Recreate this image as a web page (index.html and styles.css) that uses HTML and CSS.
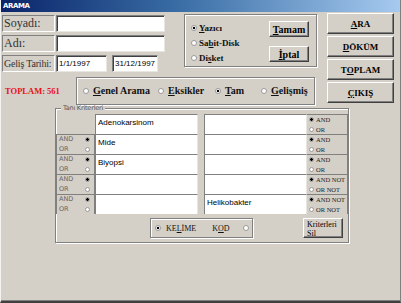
FILE: index.html
```html
<!DOCTYPE html>
<html lang="tr">
<head>
  <meta charset="UTF-8">
  <title>ARAMA</title>
  <link rel="stylesheet" href="styles.css">
</head>
<body>
  <div class="window">
    <div class="titlebar">ARAMA</div>

    <div class="content">
      <div class="upper">
        <div class="main">
          <div class="toprow">
            <div class="fields">
              <div class="field">
                <span class="label">Soyadı:</span>
                <span class="input long"></span>
              </div>
              <div class="field">
                <span class="label">Adı:</span>
                <span class="input long"></span>
              </div>
              <div class="field">
                <span class="label small">Geliş Tarihi:</span>
                <span class="input date">1/1/1997</span>
                <span class="input date2">31/12/1997</span>
              </div>
            </div>

            <div class="frame device">
              <div class="options">
                <div class="opt"><span class="radio on"></span><span><u>Y</u>azıcı</span></div>
                <div class="opt"><span class="radio"></span><span>Sa<u>b</u>it-Disk</span></div>
                <div class="opt"><span class="radio"></span><span>Di<u>s</u>ket</span></div>
              </div>
              <div class="smallbtns">
                <div class="btn small"><span><u>T</u>amam</span></div>
                <div class="btn small"><span><u>İ</u>ptal</span></div>
              </div>
            </div>
          </div>

          <div class="moderow">
            <div class="total">TOPLAM: 561</div>
            <div class="frame mode">
              <div class="opt"><span class="radio"></span><span><u>G</u>enel Arama</span></div>
              <div class="opt"><span class="radio"></span><span><u>E</u>ksikler</span></div>
              <div class="opt"><span class="radio on"></span><span><u>T</u>am</span></div>
              <div class="opt"><span class="radio"></span><span><u>G</u>elişmiş</span></div>
            </div>
          </div>
        </div>

        <div class="actions">
          <div class="btn"><span><u>A</u>RA</span></div>
          <div class="btn"><span><u>D</u>ÖKÜM</span></div>
          <div class="btn"><span>T<u>O</u>PLAM</span></div>
          <div class="btn"><span><u>Ç</u>IKIŞ</span></div>
        </div>
      </div>

      <fieldset class="criteria">
        <legend>Tanı Kriterleri</legend>

        <div class="row">
          <div class="logic none"></div>
          <div class="cell">Adenokarsinom</div>
          <div class="cell gap"></div>
          <div class="logic right">
            <span class="radio on"></span><span>AND</span>
            <span class="radio"></span><span>OR</span>
          </div>
        </div>
        <div class="row">
          <div class="logic left">
            <span>AND</span><span class="radio on"></span>
            <span>OR</span><span class="radio"></span>
          </div>
          <div class="cell">Mide</div>
          <div class="cell gap"></div>
          <div class="logic right">
            <span class="radio on"></span><span>AND</span>
            <span class="radio"></span><span>OR</span>
          </div>
        </div>
        <div class="row">
          <div class="logic left">
            <span>AND</span><span class="radio on"></span>
            <span>OR</span><span class="radio"></span>
          </div>
          <div class="cell">Biyopsi</div>
          <div class="cell gap"></div>
          <div class="logic right">
            <span class="radio on"></span><span>AND</span>
            <span class="radio"></span><span>OR</span>
          </div>
        </div>
        <div class="row">
          <div class="logic left">
            <span>AND</span><span class="radio on"></span>
            <span>OR</span><span class="radio"></span>
          </div>
          <div class="cell"></div>
          <div class="cell gap"></div>
          <div class="logic right">
            <span class="radio on"></span><span>AND NOT</span>
            <span class="radio"></span><span>OR NOT</span>
          </div>
        </div>
        <div class="row">
          <div class="logic left">
            <span>AND</span><span class="radio on"></span>
            <span>OR</span><span class="radio"></span>
          </div>
          <div class="cell"></div>
          <div class="cell gap">Helikobakter</div>
          <div class="logic right">
            <span class="radio on"></span><span>AND NOT</span>
            <span class="radio"></span><span>OR NOT</span>
          </div>
        </div>

        <div class="footer">
          <div class="frame search">
            <span class="radio on"></span>
            <span class="word">KE<u>L</u>İME</span>
            <span class="word">K<u>O</u>D</span>
            <span class="radio"></span>
          </div>
          <div class="btn clear">Kriterleri<br>Sil</div>
        </div>
      </fieldset>
    </div>
  </div>
</body>
</html>
```

FILE: styles.css
```css
* {
  box-sizing: border-box;
}

body {
  margin: 0;
  background: #d4d0c8;
  font-family: "Liberation Serif", serif;
}

.window {
  width: 401px;
  height: 303px;
  background: #d4d0c8;
  border-left: 1px solid #f4f2ee;
  border-right: 1px solid #808080;
  border-bottom: 2px solid #404040;
  box-shadow: inset 0 -1px 0 #808080;
}

.titlebar {
  height: 12px;
  padding-left: 2px;
  background: linear-gradient(to right, #0a246a, #3a6ea5 45%, #a6caf0);
  color: #fff;
  font: bold 7px/12px "DejaVu Sans", sans-serif;
  letter-spacing: -0.4px;
}

.content {
  padding: 1px 0 0 1px;
}

/* top part: fields, frames and the action buttons */
.upper {
  display: flex;
}

.main {
  width: 315px;
}

.toprow {
  display: flex;
  align-items: flex-start;
  margin-top: 1px;
}

.fields {
  display: flex;
  flex-direction: column;
  gap: 3px;
  padding-top: 1px;
}

.field {
  display: flex;
  height: 17px;
}

.label {
  width: 53px;
  margin-right: 1px;
  color: #333;
  font-size: 12px;
  line-height: 15px;
  padding-left: 1px;
  border-top: 1px solid #808080;
  border-left: 1px solid #808080;
  border-bottom: 1px solid #fff;
  border-right: 1px solid #fff;
  white-space: nowrap;
  overflow: hidden;
}

.label.small {
  font-size: 10px;
  letter-spacing: -0.2px;
}

.input {
  background: #fff;
  border-top: 1px solid #808080;
  border-left: 1px solid #808080;
  border-bottom: 1px solid #e8e6e0;
  border-right: 1px solid #e8e6e0;
  box-shadow: inset 1px 1px 0 #404040;
  font: 8px/15px "Liberation Sans", sans-serif;
  padding-left: 2px;
  color: #000;
}

.input.long {
  width: 109px;
}

.input.date {
  width: 51px;
}

.input.date2 {
  width: 46px;
  margin-left: 5px;
}

/* etched group frame */
.frame {
  border: 1px solid #808080;
  box-shadow: inset 1px 1px 0 #fff, 1px 1px 0 #fff;
}

.device {
  display: flex;
  width: 134px;
  height: 53px;
  margin-left: 19px;
  padding: 8px 0 0 6px;
}

.options {
  display: flex;
  flex-direction: column;
  gap: 5px;
  width: 78px;
}

.opt {
  display: flex;
  align-items: center;
  gap: 2px;
  font-size: 9px;
  font-weight: bold;
  line-height: 10px;
  color: #111;
  white-space: nowrap;
}

.smallbtns {
  display: flex;
  flex-direction: column;
  gap: 9px;
  margin-top: -2px;
}

.radio {
  display: inline-block;
  flex: none;
  width: 6px;
  height: 6px;
  border-radius: 50%;
  background: #fff;
  border: 1px solid #9a9a9a;
}

.radio.on {
  background: radial-gradient(circle, #000 0 1.3px, #fff 1.6px);
}

/* raised button */
.btn {
  display: flex;
  align-items: center;
  justify-content: center;
  background: #d4d0c8;
  border: 1px solid;
  border-color: #fff #404040 #404040 #fff;
  box-shadow: inset -1px -1px 0 #808080;
  font-size: 9px;
  font-weight: bold;
  color: #000;
}

.btn.small {
  width: 40px;
  height: 16px;
  font-size: 10px;
}

.actions {
  display: flex;
  flex-direction: column;
  gap: 2px;
  width: 67px;
  margin-left: 10px;
}

.actions .btn {
  height: 21px;
}

.moderow {
  display: flex;
  margin-top: 5px;
}

.total {
  width: 74px;
  padding-left: 3px;
  color: #e8101a;
  font-size: 8.5px;
  font-weight: bold;
  line-height: 28px;
}

.mode {
  display: grid;
  grid-template-columns: 75px 57px 46px auto;
  align-items: center;
  width: 239px;
  height: 28px;
  padding-left: 6px;
}

.mode .opt {
  font-size: 10px;
  gap: 4px;
}

/* criteria group */
.criteria {
  width: 294px;
  margin: -1px 0 0 53px;
  padding: 2px 0 4px;
  border: 1px solid #808080;
  box-shadow: inset 1px 1px 0 #fff, 1px 1px 0 #fff;
}

.criteria legend {
  margin-left: 5px;
  padding: 0 2px;
  background: #d4d0c8;
  color: #555;
  font: 6.5px/8px "DejaVu Sans", sans-serif;
  letter-spacing: -0.2px;
}

.row {
  display: grid;
  grid-template-columns: 39px 103px 1fr 41px;
  height: 20px;
}

.cell {
  background: #fff;
  border-top: 1px solid #808080;
  border-left: 1px solid #808080;
  border-right: 1px solid #e8e6e0;
  font: 8px/15px "Liberation Sans", sans-serif;
  padding-left: 2px;
  color: #000;
}

.cell.gap {
  margin-left: 6px;
}

.logic {
  display: grid;
  align-items: center;
  font-size: 6.5px;
  line-height: 9px;
}

.logic.left {
  grid-template-columns: 1fr auto;
  padding: 0 4px 0 2px;
  border: 1px solid #808080;
  border-bottom: none;
  color: #666;
  font-family: "DejaVu Sans", sans-serif;
}

.logic.right {
  grid-template-columns: auto 1fr;
  column-gap: 2px;
  padding-left: 2px;
  border-top: 1px solid #808080;
  border-right: 1px solid #808080;
  color: #222;
  white-space: nowrap;
}

.logic .radio {
  width: 5px;
  height: 5px;
}

.footer {
  display: flex;
  margin-top: 4px;
}

.search {
  display: flex;
  align-items: center;
  width: 103px;
  height: 20px;
  margin-left: 94px;
  padding-left: 4px;
  font-size: 8px;
  color: #111;
}

.search .word {
  margin-left: 5px;
}

.search .word + .word {
  margin-left: 16px;
}

.search .radio:last-child {
  margin-left: 13px;
}

.btn.clear {
  display: block;
  width: 40px;
  height: 20px;
  margin-left: auto;
  margin-right: 5px;
  padding: 1px 0 0 3px;
  font-size: 8px;
  font-weight: normal;
  line-height: 9px;
}
```
